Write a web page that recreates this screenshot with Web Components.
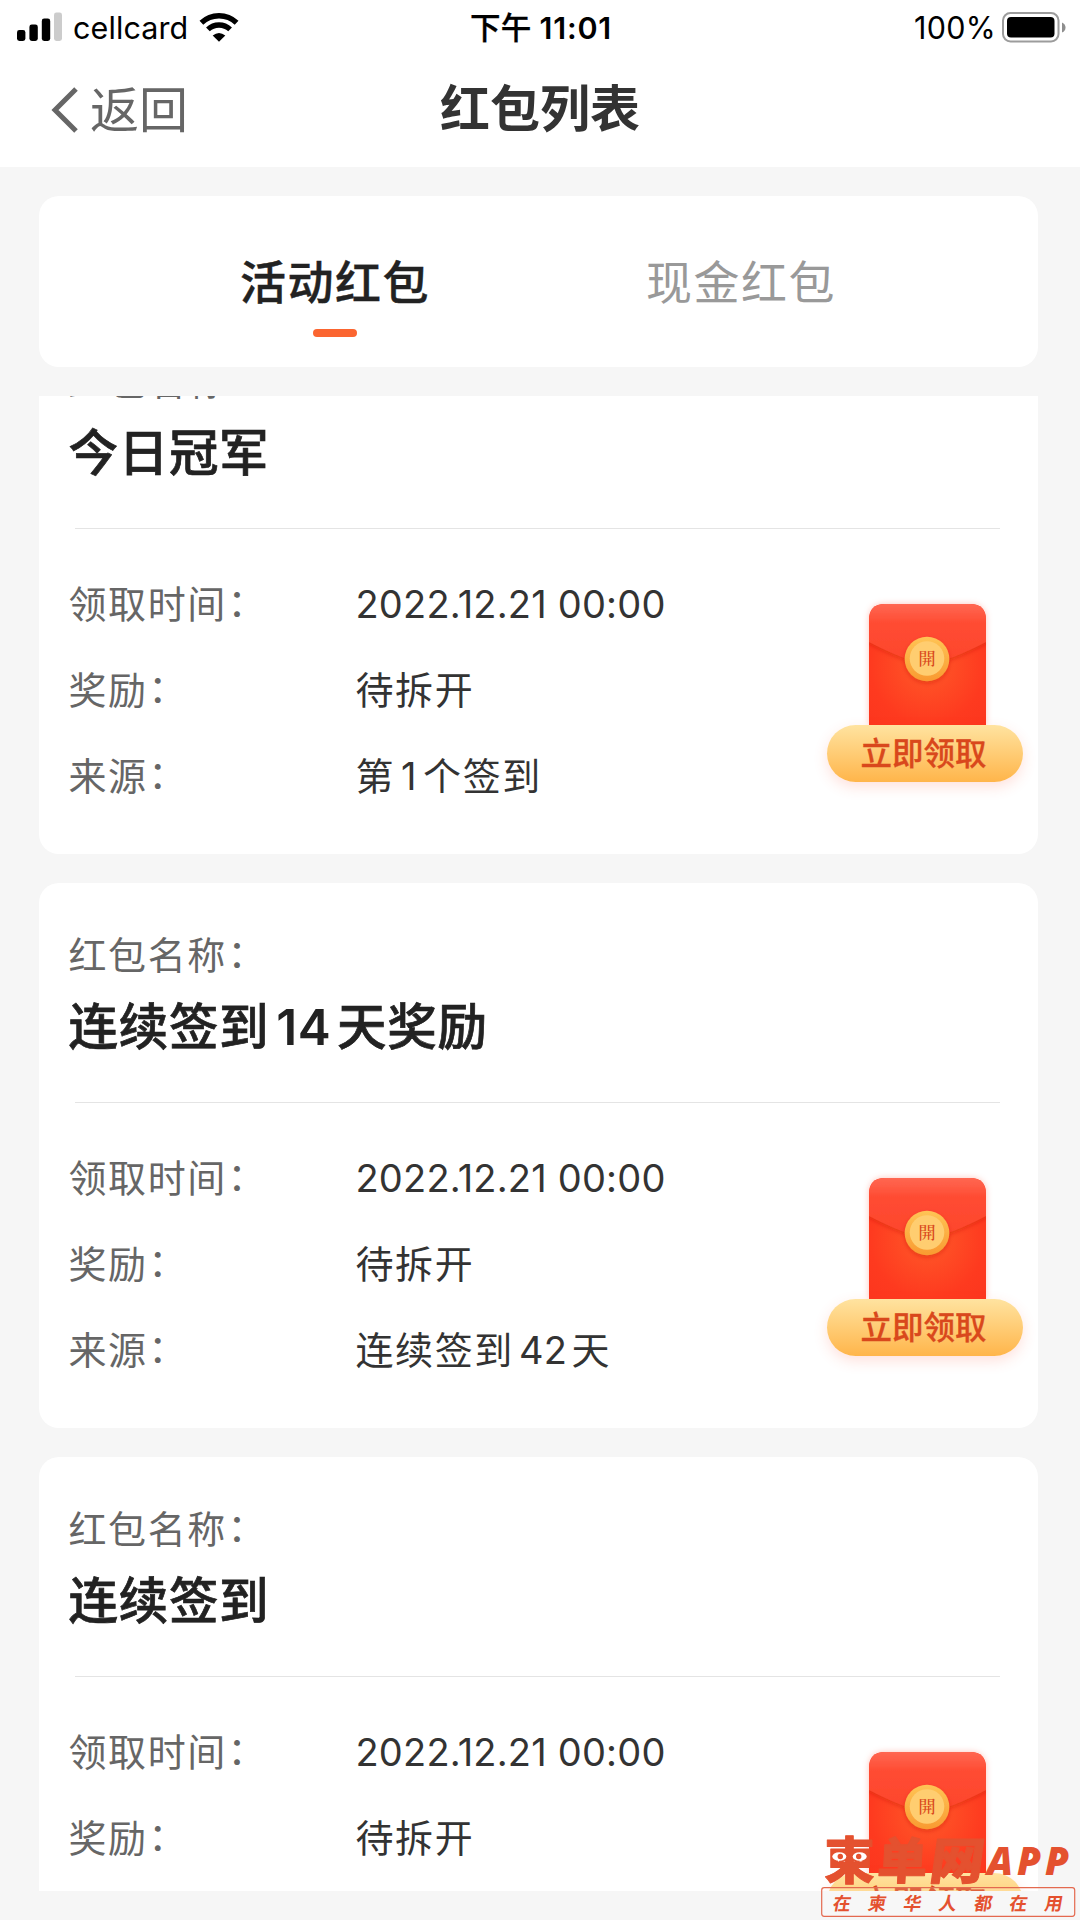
<!DOCTYPE html>
<html lang="zh-CN">
<head>
<meta charset="utf-8">
<title>红包列表</title>
<style>
html,body{margin:0;padding:0}
body{width:1080px;height:1920px;overflow:hidden;background:#f6f6f6;font-family:Inter,"Noto Sans CJK SC",sans-serif;color:#333}
</style>
</head>
<body>
<packet-app></packet-app>
<script>
const define = (name, html, init) => customElements.define(name, class extends HTMLElement {
  constructor() {
    super();
    this.attachShadow({ mode: 'open' }).innerHTML = html;
  }
  connectedCallback() { if (init) init(this, this.shadowRoot); }
});

define('status-bar', `
<style>
:host{display:grid;grid-template-columns:1fr auto 1fr;align-items:center;height:54px;padding:0 13px 0 17px;box-sizing:border-box;color:#000;font-size:30.5px;line-height:55px}
.l,.r{display:flex;align-items:center}
.r{justify-content:flex-end}
svg{display:block;flex:none}
.carrier{margin-left:11px;letter-spacing:.1px}
.wifi{margin-left:11px;margin-top:-2px}
.time{font-weight:500;letter-spacing:.3px;-webkit-text-stroke:.3px #000;margin-right:2px}
.time b{font-weight:600;margin-left:8px;letter-spacing:.8px;-webkit-text-stroke:0}
.bat{margin-left:6px}
.pct{letter-spacing:.3px}
</style>
<div class="l">
<svg style="margin-top:-2px" width="45" height="29" viewBox="0 0 45 29"><rect y="18" width="8.4" height="11" rx="2.4"/><rect x="12.4" y="12.5" width="8.4" height="16.5" rx="2.4"/><rect x="24.8" y="6.5" width="8.4" height="22.5" rx="2.4"/><rect x="37" y=".5" width="8" height="28.5" rx="2.4" fill="#ccc"/></svg>
<span class="carrier">cellcard</span>
<svg class="wifi" width="40" height="30" viewBox="0 0 40 30"><path d="M2.4 10.8A25.4 25.4 0 0 1 37.6 10.8" fill="none" stroke="#000" stroke-width="5.4"/><path d="M8.9 17.4A16.2 16.2 0 0 1 31.1 17.4" fill="none" stroke="#000" stroke-width="5.4"/><path d="M13.7 23.6Q20 18.4 26.3 23.6L20 29.8Z"/></svg>
</div>
<div class="time">下午<b>11:01</b></div>
<div class="r"><span class="pct">100%</span>
<svg class="bat" width="65" height="31" viewBox="0 0 65 31"><rect x="1" y="1" width="55.5" height="28.5" rx="7.5" fill="none" stroke="#9c9c9c" stroke-width="2"/><rect x="5" y="5" width="47.5" height="20.5" rx="4" /><path d="M60 10.5q3.5 1.5 3.5 5t-3.5 5z" fill="#8e8e8e"/></svg></div>`);

define('nav-bar', `
<style>
:host{display:grid;grid-template-columns:1fr auto 1fr;height:113px;padding:0 50px;line-height:110px;align-items:center}
.back{display:flex;align-items:center;color:#666;font-size:49px;height:113px;line-height:112px}
.back svg{margin-right:11px;margin-top:-1px;display:block}
.title{font-weight:700;font-size:50px;color:#333;line-height:110px;height:113px}
</style>
<div class="back"><svg width="29" height="46" viewBox="0 0 29 46"><path d="M26 2 5 23l21 21" fill="none" stroke="#666" stroke-width="5"/></svg><slot name="back"></slot></div>
<div class="title"><slot></slot></div>`);

define('packet-tab', `
<style>
:host{display:flex;flex-direction:column;align-items:center;width:406px;font-size:46px;letter-spacing:1.5px;color:#999;line-height:60px}
:host([active]){color:#222;font-weight:500;-webkit-text-stroke:.4px #222}
i{display:none;width:44px;height:8px;border-radius:4px;background:#fb6530;margin-top:17px}
:host([active]) i{display:block}
</style><span><slot></slot></span><i></i>`);

define('tab-card', `
<style>
:host{display:flex;justify-content:center;background:#fff;border-radius:20px;margin:29px 42px 0 39px;height:171px;padding:55.5px 1px 0 0;box-sizing:border-box}
</style><slot></slot>`);

define('red-envelope', `
<style>
:host{display:flex;flex-direction:column;align-items:center;width:196px}
svg{display:block;margin-left:4px;overflow:visible}
.btn{width:196px;height:57px;border-radius:29px;background:linear-gradient(#ffe3a0,#ffb54a);box-shadow:0 5px 14px rgba(255,80,50,.17);color:#d9481c;font-size:31.5px;font-weight:500;line-height:58px;text-align:center;text-indent:-3px;-webkit-text-stroke:.3px #d9481c;position:relative}
</style>
<svg width="117" height="121" viewBox="0 0 117 121">
<defs>
<radialGradient id="b" cx=".5" cy=".5" r=".7"><stop offset="0" stop-color="#ff5a29"/><stop offset=".7" stop-color="#fe3a1f"/><stop offset="1" stop-color="#fc361e"/></radialGradient>
<linearGradient id="f" x2="0" y2="1"><stop offset=".12" stop-color="#ff6a55"/><stop offset=".42" stop-color="#ff4c33"/><stop offset="1" stop-color="#fd452b"/></linearGradient>
<linearGradient id="c" x2="0" y2="1"><stop offset="0" stop-color="#ffc455"/><stop offset="1" stop-color="#f99a31"/></linearGradient>
<filter id="s" x="-20%" y="-20%" width="140%" height="160%"><feDropShadow dx="0" dy="2" stdDeviation="2" flood-color="#c51c08" flood-opacity=".4"/></filter>
<clipPath id="k"><path d="M0 121V16Q0 0 16 0H101Q117 0 117 16V121Z"/></clipPath>
</defs>
<path d="M0 121V16Q0 0 16 0H101Q117 0 117 16V121Z" fill="url(#b)" style="filter:drop-shadow(0 0 3px rgba(255,60,30,.3))"/>
<g clip-path="url(#k)"><path d="M-8-10H125V34L117 38Q88 53 72 57Q58 60 45 57Q29 53 0 38L-8 34Z" fill="url(#f)" filter="url(#s)"/></g>
<circle cx="58" cy="55" r="22.3" fill="url(#c)" filter="url(#s)"/>
<circle cx="58" cy="54.5" r="17.3" fill="#ffcd70"/>
<text x="58" y="60.5" text-anchor="middle" font-family="'Noto Serif CJK SC','Noto Sans CJK TC',serif" font-size="17.5" font-weight="500" fill="#d9481c">開</text>
</svg>
<div class="btn"><slot></slot></div>`);

define('info-row', `
<style>
:host{display:flex;height:86.2px;line-height:86px;font-size:38px;letter-spacing:1.6px}
.k{width:287px;color:#666;flex:none}
.v{color:#333}
.c{display:inline-block;transform:translate(.5px,-2px)}
</style><div class="k"><span class="t"></span><span class="c">：</span></div><div class="v"><slot></slot></div>`,
(h, r) => { r.querySelector('.t').textContent = h.getAttribute('label'); });

define('packet-card', `
<style>
:host{display:block;background:#fff;border-radius:20px;height:545px;box-sizing:border-box;padding:44px 15px 0 29.5px;flex:none}
.lab{font-size:38px;letter-spacing:1.6px;line-height:57px;color:#666}
.c{display:inline-block;transform:translate(.5px,-2px)}
.name{font-size:49.5px;letter-spacing:.7px;font-weight:500;line-height:72px;margin-top:7px;color:#222;-webkit-text-stroke:.7px #222}
hr{border:0;height:1px;background:#e4e4e4;margin:39px 23px 1px 6.5px}
.body{display:flex;justify-content:space-between}
.rows{padding-top:31px}
red-envelope{margin-top:74px}
</style>
<div class="lab">红包名称<span class="c">：</span></div><div class="name"><slot name="name"></slot></div><hr>
<div class="body"><div class="rows"><slot></slot></div><red-envelope>立即领取</red-envelope></div>`);

define('packet-list', `
<style>
:host{display:block;height:1495px;margin:29px 42px 0 39px;overflow:hidden}
.in{margin-top:-87px;display:flex;flex-direction:column;gap:29px}
</style><div class="in"><slot></slot></div>`);

define('water-mark', `
<style>
:host{position:absolute;left:821px;top:1830px;width:255px;height:90px}
svg{display:block}
</style>
<svg width="255" height="90" viewBox="821 1830 255 90" fill="#e4512f" font-family="'Noto Sans CJK SC',sans-serif" font-weight="900">
<g stroke="#e4512f" stroke-width="1" stroke-linejoin="round" font-size="50">
<text x="824.5" y="1878.5">柬</text><text transform="translate(876.5 1878.5) skewX(-3)">单</text><text transform="translate(928 1878.5) skewX(-8) scale(1.08 1)">网</text></g>
<ellipse cx="839.3" cy="1856.5" rx="7" ry="4.3" fill="#fff"/><ellipse cx="859.7" cy="1856.5" rx="7" ry="4.3" fill="#fff"/><circle cx="840.3" cy="1856.5" r="2.7"/><circle cx="858.7" cy="1856.5" r="2.7"/>
<text x="987" y="1874.8" font-family="'Open Sans','Noto Sans',sans-serif" font-size="38.5" font-weight="800" font-style="italic" textLength="82">APP</text>
<rect x="821.7" y="1887.7" width="253" height="28.6" rx="2.5" fill="#fff" fill-opacity=".15" stroke="#e4694f" stroke-width="1.2"/>
<text transform="translate(832 1910) skewX(-10)" font-size="18" font-weight="700" letter-spacing="17.3">在柬华人都在用</text>
</svg>`);

define('packet-app', `
<style>
:host{display:block;position:relative;width:1080px;height:1920px;overflow:hidden;background:#f6f6f6}
header{background:#fff;height:167px}
b{font-weight:400}
.n14{font-weight:600;margin:0 6px 0 7px;letter-spacing:.4px;-webkit-text-stroke:0}
.n1{margin:0 6.5px 0 6px;letter-spacing:0}
.n42{margin:0 4px 0 5px;letter-spacing:.4px}
.dt{letter-spacing:.2px}
</style>
<header><status-bar></status-bar><nav-bar><span slot="back">返回</span>红包列表</nav-bar></header>
<tab-card><packet-tab active>活动红包</packet-tab><packet-tab>现金红包</packet-tab></tab-card>
<packet-list>
<packet-card><span slot="name">今日冠军</span>
<info-row label="领取时间"><b class="dt">2022.12.21 00:00</b></info-row><info-row label="奖励">待拆开</info-row><info-row label="来源">第<b class="n1">1</b>个签到</info-row></packet-card>
<packet-card><span slot="name">连续签到<b class="n14">14</b>天奖励</span>
<info-row label="领取时间"><b class="dt">2022.12.21 00:00</b></info-row><info-row label="奖励">待拆开</info-row><info-row label="来源">连续签到<b class="n42">42</b>天</info-row></packet-card>
<packet-card><span slot="name">连续签到</span>
<info-row label="领取时间"><b class="dt">2022.12.21 00:00</b></info-row><info-row label="奖励">待拆开</info-row><info-row label="来源">连续签到</info-row></packet-card>
</packet-list>
<water-mark></water-mark>`);
</script>
</body>
</html>
